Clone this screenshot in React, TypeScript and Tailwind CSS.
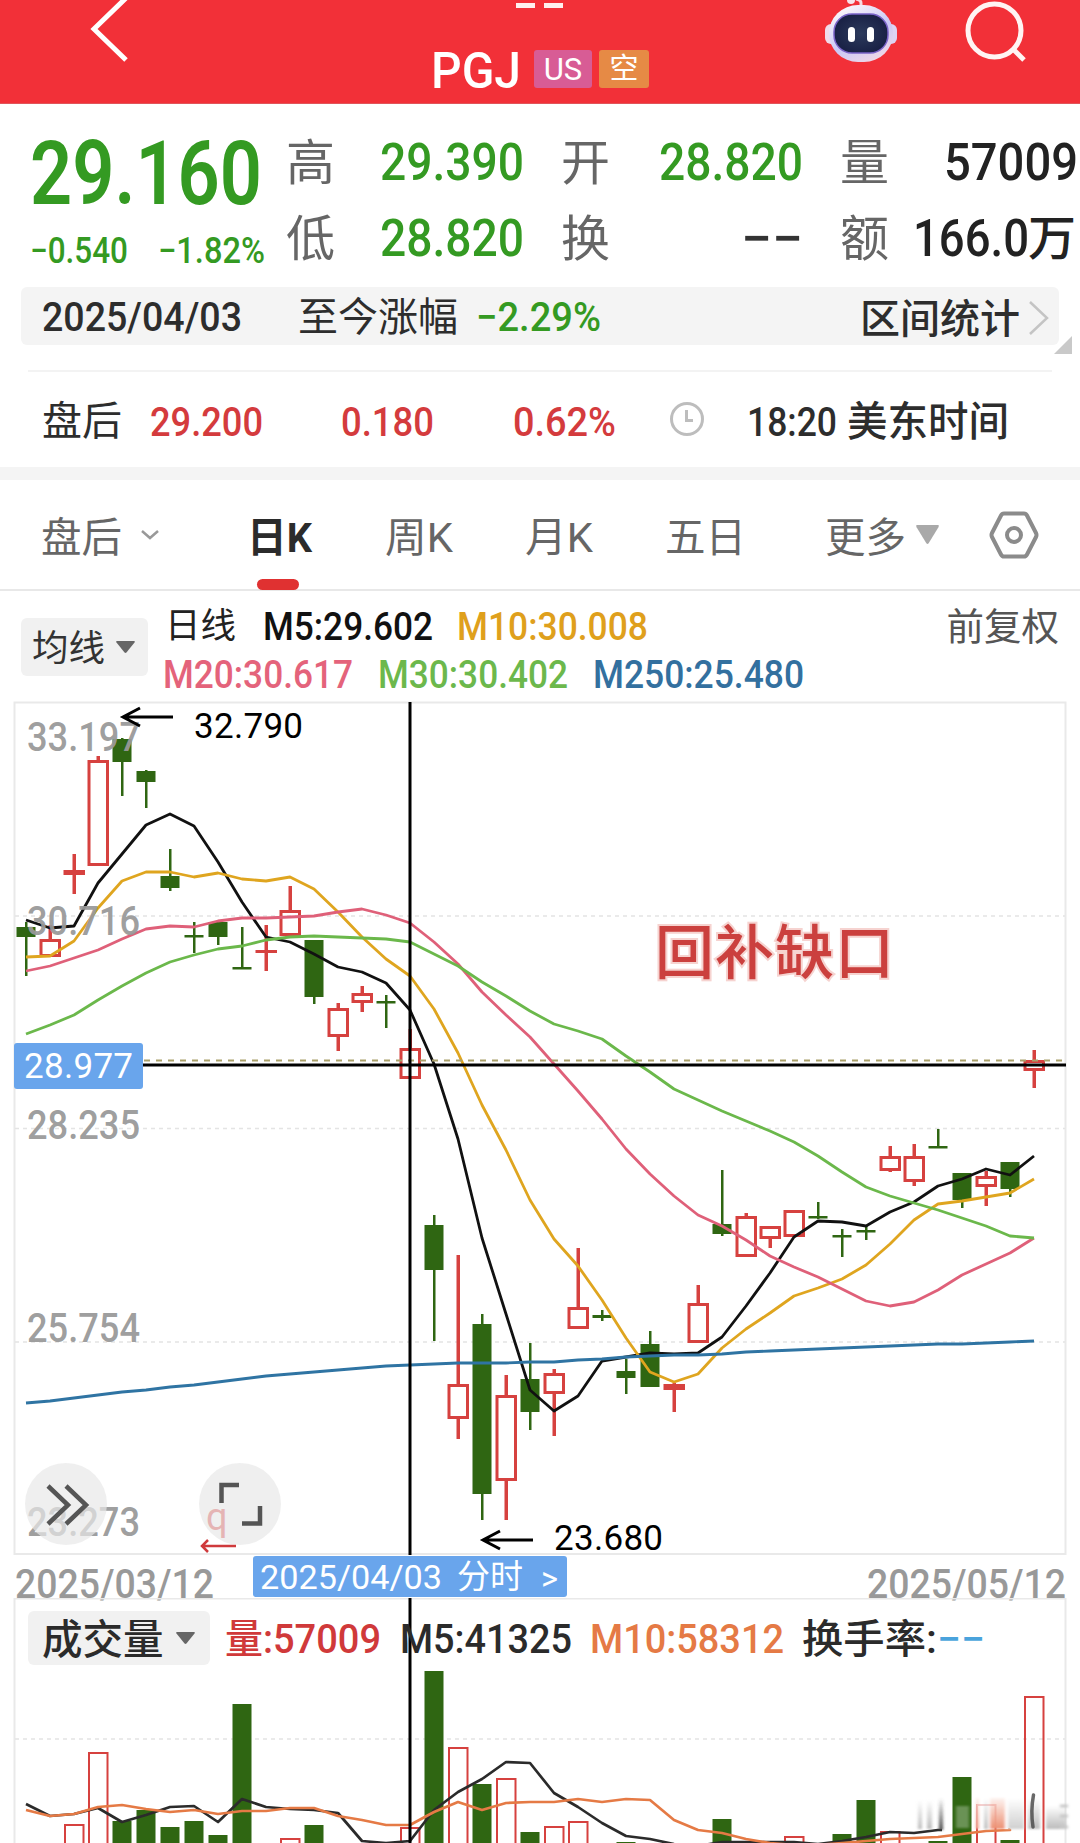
import type { ReactNode } from "react";

// [direction, high, body top, body bottom, low]
type Candle = ["up" | "down", number, number, number, number];

const candles: Candle[] = [
  ["down", 922, 927, 937, 976],
  ["up", 925, 939, 957, 957],
  ["up", 854, 870, 874, 894],
  ["up", 756, 760, 866, 866],
  ["down", 738, 739, 762, 796],
  ["down", 770, 771, 782, 808],
  ["down", 849, 876, 888, 891],
  ["down", 922, 935, 937, 953],
  ["down", 922, 922, 937, 945],
  ["down", 927, 967, 969, 969],
  ["up", 925, 950, 952, 971],
  ["up", 886, 910, 936, 936],
  ["down", 940, 940, 997, 1004],
  ["up", 1003, 1008, 1037, 1051],
  ["up", 986, 993, 1003, 1012],
  ["down", 995, 1001, 1003, 1028],
  ["up", 1029, 1048, 1079, 1079],
  ["down", 1215, 1225, 1270, 1341],
  ["up", 1255, 1384, 1419, 1439],
  ["down", 1314, 1324, 1494, 1520],
  ["up", 1375, 1395, 1481, 1520],
  ["down", 1343, 1379, 1412, 1430],
  ["up", 1369, 1373, 1394, 1436],
  ["up", 1248, 1307, 1329, 1329],
  ["down", 1310, 1315, 1318, 1321],
  ["down", 1359, 1371, 1378, 1394],
  ["down", 1331, 1344, 1387, 1387],
  ["up", 1383, 1384, 1389, 1412],
  ["up", 1285, 1303, 1343, 1343],
  ["down", 1170, 1224, 1234, 1236],
  ["up", 1213, 1216, 1257, 1257],
  ["up", 1226, 1226, 1239, 1248],
  ["up", 1210, 1210, 1237, 1237],
  ["down", 1202, 1216, 1218, 1219],
  ["down", 1229, 1235, 1237, 1257],
  ["down", 1226, 1230, 1232, 1240],
  ["up", 1146, 1156, 1171, 1172],
  ["up", 1144, 1156, 1182, 1186],
  ["down", 1129, 1146, 1148, 1148],
  ["down", 1173, 1173, 1200, 1208],
  ["up", 1171, 1176, 1187, 1206],
  ["down", 1162, 1162, 1189, 1197],
  ["up", 1050, 1060, 1071, 1088],
];

const ma5 = [
  920, 928, 926, 883, 854, 825, 814, 826, 862, 902, 937, 942, 954, 967, 972, 983, 1010, 1064, 1139, 1238, 1314, 1390,
  1411, 1396, 1361, 1357, 1353, 1354, 1353, 1337, 1306, 1273, 1237, 1221, 1222, 1226, 1212, 1202, 1186, 1179, 1169,
  1175, 1156,
];
const ma10 = [
  957, 956, 941, 908, 881, 872, 872, 877, 873, 879, 881, 877, 889, 912, 937, 959, 976, 1009, 1053, 1105, 1150, 1200,
  1239, 1266, 1300, 1338, 1372, 1382, 1374, 1348, 1329, 1313, 1296, 1288, 1279, 1265, 1244, 1220, 1204, 1201, 1197,
  1193, 1179,
];
const ma20 = [
  971, 966, 958, 950, 939, 929, 926, 927, 921, 918, 918, 917, 916, 912, 909, 915, 923, 942, 964, 992, 1015, 1037, 1064,
  1091, 1119, 1149, 1174, 1196, 1215, 1226, 1240, 1256, 1267, 1277, 1289, 1301, 1306, 1302, 1290, 1275, 1264, 1253,
  1238,
];
const ma30 = [
  1034, 1025, 1015, 1000, 986, 973, 962, 955, 949, 946, 940, 937, 936, 937, 938, 939, 942, 954, 966, 982, 996, 1011,
  1024, 1031, 1039, 1056, 1072, 1089, 1100, 1111, 1121, 1131, 1142, 1156, 1172, 1187, 1196, 1203, 1210, 1218, 1226,
  1236, 1238,
];
const ma250 = [
  1403, 1401, 1398, 1395, 1392, 1390, 1387, 1385, 1382, 1379, 1376, 1374, 1372, 1370, 1368, 1366, 1365, 1364, 1363,
  1363, 1363, 1362, 1362, 1360, 1359, 1357, 1356, 1355, 1355, 1354, 1352, 1351, 1350, 1349, 1348, 1347, 1346, 1345,
  1344, 1344, 1343, 1342, 1341,
];

const volumes: [number, "up" | "down", number][] = [
  [2, "up", 1825],
  [3, "up", 1753],
  [4, "down", 1821],
  [5, "down", 1810],
  [6, "down", 1827],
  [7, "down", 1821],
  [8, "down", 1835],
  [9, "down", 1704],
  [11, "up", 1839],
  [12, "down", 1825],
  [16, "up", 1828],
  [17, "down", 1671],
  [18, "up", 1748],
  [19, "down", 1784],
  [20, "up", 1779],
  [21, "down", 1832],
  [22, "up", 1827],
  [23, "up", 1822],
  [25, "down", 1842],
  [29, "down", 1819],
  [32, "up", 1837],
  [34, "down", 1834],
  [35, "down", 1800],
  [36, "up", 1832],
  [38, "down", 1841],
  [39, "down", 1777],
  [40, "up", 1805],
  [41, "down", 1840],
  [42, "up", 1697],
];
const vol5 = [
  1804, 1816, 1814, 1808, 1822, 1815, 1807, 1806, 1822, 1799, 1807, 1809, 1810, 1813, 1841, 1843, 1841, 1810, 1792,
  1779, 1762, 1763, 1793, 1807, 1823, 1836, 1839, 1844, 1846, 1842, 1842, 1842, 1842, 1844, 1841, 1837, 1832, 1833,
  1830,
];
const vol10 = [
  1810, 1816, 1814, 1807, 1805, 1809, 1812, 1810, 1814, 1811, 1811, 1808, 1808, 1816, 1820, 1825, 1825, 1812, 1802,
  1810, 1803, 1802, 1802, 1799, 1802, 1799, 1800, 1820, 1830, 1833, 1839, 1843, 1845, 1845, 1843, 1841, 1839, 1838,
  1837, 1834, 1831, 1830,
];

const px = (i: number) => 26 + i * 24;
const toPoints = (ys: number[]) => ys.map((y, i) => `${px(i)},${y}`).join(" ");

const RED = "#d6413f";
const GREEN = "#2f6612";

function Cell({ className, width, children }: { className?: string; width: number; children: ReactNode }) {
  return (
    <svg width={width} height="1em" className={`shrink-0 overflow-visible fill-current ${className ?? ""}`}>
      <text x="-1" y="0.87em" textLength={width + 2} lengthAdjust="spacingAndGlyphs">
        {children}
      </text>
    </svg>
  );
}

function Caret({ className }: { className: string }) {
  return (
    <svg viewBox="0 0 20 13" className={className} preserveAspectRatio="none">
      <path d="M1 0h18q1.500 0 .5 1.500l-8.500 11q-1 1-2 0l-8.500-11q-1-1.500.5-1.500z" fill="currentColor" />
    </svg>
  );
}

function Header() {
  return (
    <header className="relative flex h-[104px] items-start border-b border-[#e0555a] bg-[#f23038] text-white">
      <svg className="ml-[89px] h-[64px] w-[42px]" viewBox="0 0 42 64" fill="none" stroke="#fff" strokeWidth="5">
        <path d="M37-2 5 29l32 31" />
      </svg>
      <div className="ml-[301px] mt-[44px] flex w-[380px] items-center">
        <Cell width={88} className="text-[50px] font-medium">PGJ</Cell>
        <span className="ml-[14px] flex h-[38px] w-[58px] items-center justify-center rounded-[3px] bg-[#d85c95] text-[31px] leading-none">
          US
        </span>
        <span className="ml-[7px] flex h-[38px] w-[50px] items-center justify-center rounded-[3px] bg-[#e68a45] text-[29px] leading-none">
          空
        </span>
      </div>
      <div className="absolute left-[516px] top-[3px] flex gap-[9px]">
        <span className="h-[5px] w-[19px] bg-[#fff0ee]" />
        <span className="h-[5px] w-[19px] bg-[#fff0ee]" />
      </div>
      <svg className="absolute left-[820px] top-0" width="82" height="66" viewBox="0 0 82 66">
        <defs>
          <linearGradient id="shell" x1="0.2" y1="0" x2="0.8" y2="1">
            <stop offset="0" stopColor="#fffafa" />
            <stop offset="0.55" stopColor="#c9c8f6" />
            <stop offset="1" stopColor="#f3d9e6" />
          </linearGradient>
          <radialGradient id="visor">
            <stop offset="0" stopColor="#2c3a5c" />
            <stop offset="1" stopColor="#1a2246" />
          </radialGradient>
        </defs>
        <path d="M41 7V3q0-3-5-4" stroke="#f7d8e0" strokeWidth="3" fill="none" />
        <circle cx="31" cy="0" r="4" fill="#f7e3ea" />
        <rect x="5" y="24" width="12" height="20" rx="6" fill="#f0dcea" />
        <rect x="65" y="24" width="12" height="20" rx="6" fill="#ddd3f3" />
        <rect x="9" y="5" width="64" height="57" rx="29" fill="url(#shell)" />
        <rect x="14" y="14" width="54" height="39" rx="18" fill="url(#visor)" stroke="#7a63c8" strokeWidth="1.500" />
        <rect x="28" y="27" width="7" height="15" rx="3.500" fill="#fff" />
        <rect x="47" y="27" width="7" height="15" rx="3.500" fill="#fff" />
      </svg>
      <svg className="absolute left-[960px] top-0" width="70" height="66" viewBox="0 0 70 66" fill="none" stroke="#fff4f3" strokeWidth="5">
        <circle cx="34.500" cy="30.500" r="26.500" />
        <path d="m53 49 11 11" />
      </svg>
    </header>
  );
}

function Quote() {
  return (
    <section className="flex h-[183px] pl-[31px] font-medium text-[#349a22]">
      <div className="w-[255px] pt-[23px]">
        <Cell width={230} className="block text-[89px] font-semibold">29.160</Cell>
        <div className="mt-[16px] flex gap-[32px] text-[36px]">
          <Cell width={96}>−0.540</Cell>
          <Cell width={105}>−1.82%</Cell>
        </div>
      </div>
      <div className="flex flex-col gap-[24px] pt-[31px] text-[51px]">
        <div className="flex h-[52px] items-center">
          <span className="w-[95px] pt-[5px] text-[49px] leading-none font-normal text-[#666]">高</span>
          <Cell width={142}>29.390</Cell>
          <span className="ml-[38px] w-[99px] pt-[5px] text-[49px] leading-none font-normal text-[#666]">开</span>
          <Cell width={142}>28.820</Cell>
          <span className="ml-[38px] w-[105px] pt-[5px] text-[49px] leading-none font-normal text-[#666]">量</span>
          <Cell width={132} className="text-[#222]">57009</Cell>
        </div>
        <div className="flex h-[52px] items-center">
          <span className="w-[95px] pt-[5px] text-[49px] leading-none font-normal text-[#666]">低</span>
          <Cell width={142}>28.820</Cell>
          <span className="ml-[38px] w-[181px] pt-[5px] text-[49px] leading-none font-normal text-[#666]">换</span>
          <Cell width={60} className="text-[#333]">−−</Cell>
          <span className="ml-[38px] w-[74px] pt-[5px] text-[49px] leading-none font-normal text-[#666]">额</span>
          <Cell width={114} className="text-[#222]">166.0</Cell>
          <span className="pt-[3px] text-[48px] leading-none text-[#222]">万</span>
        </div>
      </div>
    </section>
  );
}

function RangeBar() {
  return (
    <section className="relative mx-[21px] flex h-[58px] items-center rounded-md bg-[#f4f4f4] pl-[22px] text-[40px] leading-none text-[#2d2d2d]">
      <Cell width={198} className="font-medium">2025/04/03</Cell>
      <span className="ml-[57px] pt-[4px]">至今涨幅</span>
      <Cell width={123} className="ml-[19px] font-medium text-[#349a22]">−2.29%</Cell>
      <span className="ml-[260px] pt-[7px] font-medium">区间统计</span>
      <svg className="ml-[8px] mt-[3px]" width="22" height="38" viewBox="0 0 22 38" fill="none" stroke="#c4c4c4" strokeWidth="2.500">
        <path d="m2 3 17 16L2 35" />
      </svg>
      <svg className="absolute -right-[13px] top-[49px]" width="18" height="18">
        <path d="M18 0v18H0z" fill="#c9c9c9" />
      </svg>
    </section>
  );
}

function AfterHours() {
  return (
    <section className="mx-[28px] mt-[25px] flex h-[97px] items-center border-t-2 border-[#f3f3f3] pt-[2px] pl-[14px] text-[40px] leading-none text-[#2d2d2d]">
      <span className="w-[109px] pt-[3px]">盘后</span>
      <Cell width={111} className="font-medium text-[#d43b3d]">29.200</Cell>
      <Cell width={91} className="ml-[80px] font-medium text-[#d43b3d]">0.180</Cell>
      <Cell width={101} className="ml-[81px] font-medium text-[#d43b3d]">0.62%</Cell>
      <svg className="ml-[54px] mb-[4px]" width="36" height="36" viewBox="0 0 36 36" fill="none" stroke="#bdbdbd" strokeWidth="3">
        <circle cx="18" cy="18" r="15.500" />
        <path d="M17.500 9v10.500H24" />
      </svg>
      <Cell width={88} className="ml-[43px] font-medium">18:20</Cell>
      <span className="ml-[11px] pt-[3px] text-[40.5px] font-medium">美东时间</span>
    </section>
  );
}

function Tabs() {
  return (
    <nav className="flex h-[111px] items-center border-b-2 border-[#e8e8e8] pl-[41px] text-[40.5px] leading-none text-[#666]">
      <span className="pt-[7px]">盘后</span>
      <svg className="ml-[18px]" width="20" height="12" viewBox="0 0 20 12" fill="none" stroke="#999" strokeWidth="2.500">
        <path d="m2 2 8 7 8-7" />
      </svg>
      <span className="relative ml-[88px] w-[64px] pt-[6px] font-bold text-[#2b2b2b]">
        <Cell width={63}>日K</Cell>
        <span className="absolute left-[9px] top-[68px] h-[11px] w-[42px] rounded-full bg-[#e03131]" />
      </span>
      <Cell width={66} className="ml-[74px] mt-[6px]">周K</Cell>
      <Cell width={66} className="ml-[74px] mt-[6px]">月K</Cell>
      <span className="ml-[73px] pt-[7px]">五日</span>
      <span className="ml-[79px] pt-[7px]">更多</span>
      <Caret className="ml-[10px] h-[19px] w-[23px] text-[#a9a9a9]" />
      <svg className="ml-[50px]" width="50" height="48" viewBox="0 0 50 48" fill="none" stroke="#8b8b8b" strokeWidth="4">
        <path d="M15 2.500h20q2 0 3 2L47 22q1 2 0 4l-9 17.500q-1 2-3 2H15q-2 0-3-2L3 26q-1-2 0-4l9-17.500q1-2 3-2z" />
        <circle cx="25" cy="24" r="7" />
      </svg>
    </nav>
  );
}

function Legend() {
  return (
    <section className="flex h-[110px] pl-[21px] pr-[21px] text-[38px] font-medium leading-none">
      <div className="mt-[27px] flex h-[58px] w-[127px] items-center rounded-md bg-[#f1f1f1] pl-[11px] text-[36.5px] text-[#333]">
        <span className="pt-[5px] font-normal">均线</span>
        <Caret className="ml-[11px] h-[12px] w-[19px] text-[#666]" />
      </div>
      <div className="ml-[17px] flex flex-1 flex-col pt-[16px]">
        <div className="flex items-center">
          <span className="mr-[28px] pt-[2px] text-[35.5px] font-normal text-[#222]">日线</span>
          <Cell width={168} className="text-[#111]">M5:29.602</Cell>
          <Cell width={189} className="ml-[26px] text-[#dfa01c]">M10:30.008</Cell>
        </div>
        <div className="-ml-px mt-[10px] flex gap-[27px]">
          <Cell width={188} className="text-[#e4637b]">M20:30.617</Cell>
          <Cell width={188} className="text-[#6cb84c]">M30:30.402</Cell>
          <Cell width={209} className="text-[#33709f]">M250:25.480</Cell>
        </div>
      </div>
      <span className="pt-[18px] text-[37.5px] font-normal text-[#555]">前复权</span>
    </section>
  );
}

function CandleMark({ x, data }: { x: number; data: Candle }) {
  const [dir, high, top, bottom, low] = data;
  const h = bottom - top;
  if (dir === "down") {
    return (
      <g fill={GREEN}>
        <rect x={x - 1} y={high} width="2.500" height={low - high} />
        <rect x={x - 9.5} y={top} width="19" height={Math.max(h, 2.5)} />
      </g>
    );
  }
  return (
    <g fill={RED}>
      <rect x={x - 1.5} y={high} width="3.500" height={top - high} />
      <rect x={x - 1.5} y={bottom} width="3.500" height={low - bottom} />
      {h > 8 ? (
        <rect x={x - 9} y={top + 1.5} width="18.500" height={h - 3} fill="none" stroke={RED} strokeWidth="3" />
      ) : (
        <rect x={x - 10.5} y={top} width="21.500" height={h + 1} />
      )}
    </g>
  );
}

function PriceChart() {
  const labels: [string, number][] = [
    ["33.197", 751],
    ["30.716", 935],
    ["28.235", 1139],
    ["25.754", 1342],
    ["23.273", 1536],
  ];
  return (
    <svg className="block" width="1080" height="854" viewBox="0 701 1080 854">
      <rect x="14.500" y="702.500" width="1051" height="851.500" fill="none" stroke="#e9e9e9" strokeWidth="2" />
      {[916, 1128.5, 1342].map((y) => (
        <path key={y} d={`M15 ${y}H1065`} stroke="#e4e4e4" strokeWidth="1.500" strokeDasharray="4 4" />
      ))}
      {candles.map((c, i) => (
        <CandleMark key={i} x={px(i)} data={c} />
      ))}
      <g fill="none" strokeWidth="2.800" strokeLinejoin="round">
        <polyline points={toPoints(ma5)} stroke="#111" />
        <polyline points={toPoints(ma10)} stroke="#dfa51f" />
        <polyline points={toPoints(ma20)} stroke="#df6079" />
        <polyline points={toPoints(ma30)} stroke="#6bb84b" />
        <polyline points={toPoints(ma250)} stroke="#2f74a3" />
      </g>
      <path d="M144 1060.500H1065" stroke="#aaa06a" strokeWidth="2" strokeDasharray="6 6" />
      <path d="M410 702v853M143 1065H1066" stroke="#000" strokeWidth="3" />
      <g fill="#999" fontSize="41" fontWeight="500" fillOpacity="0.95">
        {labels.map(([label, y]) => (
          <text key={label} x="27" y={y} textLength="113" lengthAdjust="spacingAndGlyphs">
            {label}
          </text>
        ))}
      </g>
      <g stroke="#000" strokeWidth="3" fill="none">
        <path d="M173 717h-50M140 708l-17 9 17 9" />
        <path d="M533 1540h-50M500 1531l-17 9 17 9" />
      </g>
      <g fontSize="35" fill="#000">
        <text x="194" y="738" textLength="109">32.790</text>
        <text x="554" y="1550" textLength="109">23.680</text>
      </g>
      <rect x="14" y="1043" width="129" height="46" rx="3" fill="#69a5ec" />
      <text x="24" y="1078" fontSize="35" fill="#fff" textLength="109">
        28.977
      </text>
      <text
        x="655"
        y="974"
        fontSize="59"
        fontWeight="500"
        fill="#cb403e"
        letterSpacing="1"
        stroke="#f6d3d0"
        strokeWidth="4"
        paintOrder="stroke"
      >
        回补缺口
      </text>
      <text x="206" y="1530" fontSize="38" fill="#dc3a3a">q</text>
      <g fill="#e8e8e8" fillOpacity="0.7">
        <circle cx="66" cy="1504" r="41" />
        <circle cx="240" cy="1504" r="41" />
      </g>
      <g fill="none" stroke="#555" strokeWidth="4.500">
        <path d="m48 1486 20 19-20 19M66 1486l20 19-20 19" />
        <path d="M221.500 1503v-18H239M260 1506v17.500H242" />
      </g>
      <path d="M236 1546h-34M208 1540l-6 6 6 6" fill="none" stroke="#cf3a3c" strokeWidth="2.500" />
    </svg>
  );
}

function DateAxis() {
  return (
    <div className="flex h-[43px] items-start pl-[16px] text-[40px] leading-none text-[#999]">
      <Cell width={197} className="mt-[8px] font-medium">2025/03/12</Cell>
      <div className="ml-[40px] mt-[1px] flex h-[41px] w-[314px] items-center rounded-[3px] bg-[#69a5ec] pl-[8px] text-[34px] text-white">
        <Cell width={180} className="-mt-[2px]">2025/04/03</Cell>
        <span className="ml-[16px] text-[33px]">分时</span>
        <Cell width={15} className="ml-[19px]">&gt;</Cell>
      </div>
      <Cell width={197} className="ml-[301px] mt-[8px] font-medium">2025/05/12</Cell>
    </div>
  );
}

function VolumePanel() {
  return (
    <section className="relative h-[245px]">
      <svg className="absolute inset-0" width="1080" height="245" viewBox="0 1598 1080 245">
        <defs>
          <filter id="smear" x="-20%" y="-20%" width="140%" height="140%">
            <feGaussianBlur stdDeviation="1.800 0.800" />
          </filter>
          <linearGradient id="fadeGray" x1="0" y1="0" x2="0" y2="1">
            <stop offset="0" stopColor="#bbb" stopOpacity="0" />
            <stop offset="1" stopColor="#bbb" />
          </linearGradient>
          <linearGradient id="fadeDark" x1="0" y1="0" x2="0" y2="1">
            <stop offset="0" stopColor="#444" stopOpacity="0" />
            <stop offset="1" stopColor="#444" />
          </linearGradient>
          <linearGradient id="fadeOrange" x1="0" y1="0" x2="0" y2="1">
            <stop offset="0" stopColor="#ec8f72" stopOpacity="0.1" />
            <stop offset="1" stopColor="#ec8f72" />
          </linearGradient>
        </defs>
        <path d="M14.500 1843v-244.500h1051V1843" fill="none" stroke="#e9e9e9" strokeWidth="2" />
        <path d="M15 1739H1065" stroke="#e4e4e4" strokeWidth="1.500" strokeDasharray="4 4" />
        {volumes.map(([i, dir, top]) =>
          dir === "down" ? (
            <rect key={i} x={px(i) - 9.5} y={top} width="19" height={1850 - top} fill={GREEN} />
          ) : (
            <rect key={i} x={px(i) - 9} y={top} width="18.500" height={1860 - top} fill="none" stroke={RED} strokeWidth="2" />
          )
        )}
        <g fill="none" strokeWidth="2.700" strokeLinejoin="round">
          <polyline points={`${toPoints(vol5)} 942,1830`} stroke="#2b2b2b" />
          <polyline points={`${toPoints(vol10)} 1008,1829`} stroke="#e57a45" />
        </g>
        <path d="M410 1598v245" stroke="#000" strokeWidth="3" />
        <g filter="url(#smear)">
          <rect x="975" y="1798" width="46" height="31" fill="#fff" fillOpacity="0.75" />
          <rect x="918" y="1800" width="4" height="29" fill="url(#fadeGray)" />
          <rect x="927" y="1800" width="5" height="29" fill="url(#fadeGray)" />
          <rect x="939" y="1798" width="4" height="32" fill="url(#fadeDark)" />
          <rect x="956" y="1806" width="13" height="22" fill="#a5bd98" fillOpacity="0.5" />
          <rect x="976" y="1798" width="3" height="31" fill="url(#fadeOrange)" />
          <rect x="984" y="1798" width="4" height="31" fill="url(#fadeGray)" />
          <rect x="990" y="1798" width="15" height="31" fill="url(#fadeOrange)" />
          <rect x="1008" y="1798" width="16" height="31" fill="url(#fadeGray)" fillOpacity="0.7" />
          <rect x="1028" y="1798" width="12" height="31" fill="url(#fadeGray)" />
          <rect x="1046" y="1806" width="20" height="23" fill="url(#fadeGray)" />
          <path d="M1060 1806h8M1060 1816h8M1060 1827h8" stroke="#c8c8c8" strokeWidth="3" />
        </g>
        <path d="M1033.500 1795q-3 16-.5 32" stroke="#444" strokeWidth="3.500" strokeOpacity="0.8" strokeLinecap="round" fill="none" />
      </svg>
      <div className="relative flex items-center pl-[28px] pt-[13px] text-[40px] font-medium leading-none text-[#2b2b2b]">
        <div className="flex h-[54px] w-[182px] items-center rounded-md bg-[#f1f1f1] pl-[14px]">
          <span className="pt-[5px] text-[40.5px]">成交量</span>
          <Caret className="ml-[12px] h-[12px] w-[19px] text-[#666]" />
        </div>
        <Cell width={154} className="ml-[16px] text-[#d0393a]">量:57009</Cell>
        <Cell width={170} className="ml-[21px]">M5:41325</Cell>
        <Cell width={192} className="ml-[20px] text-[#e57a45]">M10:58312</Cell>
        <Cell width={133} className="ml-[20px]">换手率:</Cell>
        <Cell width={46} className="ml-[2px] text-[#4aa3dc]">−−</Cell>
      </div>
    </section>
  );
}

export default function App() {
  return (
    <div className="h-[1843px] w-[1080px] overflow-hidden bg-white font-[Roboto,'Noto_Sans_CJK_SC',sans-serif]">
      <Header />
      <Quote />
      <RangeBar />
      <AfterHours />
      <div className="h-[13px] bg-[#f4f4f4]" />
      <Tabs />
      <Legend />
      <PriceChart />
      <DateAxis />
      <VolumePanel />
    </div>
  );
}
